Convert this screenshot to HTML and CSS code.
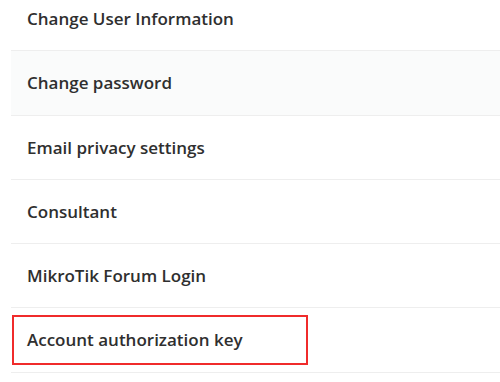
FILE: index.html
```html
<!DOCTYPE html>
<html lang="en">
  <head>
    <meta charset="UTF-8" />
    <title>Account settings</title>
    <link rel="stylesheet" href="styles.css">
  </head>
  <body>
    <ul class="menu">
      <li class="item"><a class="link" href="#">Change User Information</a></li>
      <li class="item shaded"><a class="link" href="#">Change password</a></li>
      <li class="item"><a class="link" href="#">Email privacy settings</a></li>
      <li class="item"><a class="link" href="#">Consultant</a></li>
      <li class="item"><a class="link" href="#">MikroTik Forum Login</a></li>
      <li class="item">
        <a class="link marked" href="#">Account authorization key</a>
      </li>
    </ul>
  </body>
</html>
```

FILE: styles.css
```css
body {
  margin: 0;
  background: #fff;
  font: 600 17px "Open Sans", "Liberation Sans", sans-serif;
  color: #2f2f2f;
  overflow: hidden;
}
.menu {
  list-style: none;
  margin: -13px 0 0 11px;
  padding: 0;
}
.item {
  height: 63.25px;
  border-bottom: 1px solid #eeeeee;
  display: flex;
  align-items: center;
}
.item.shaded {
  background-color: #fafbfb;
}
.link {
  color: #2f2f2f;
  text-decoration: none;
  padding-left: 16px;
  display: flex;
  align-items: center;
  height: 100%;
}
.link.marked {
  box-sizing: border-box;
  height: 50px;
  width: 296px;
  margin-left: 1px;
  padding-left: 13px;
  border: 2px solid #f02b2b;
}
```
